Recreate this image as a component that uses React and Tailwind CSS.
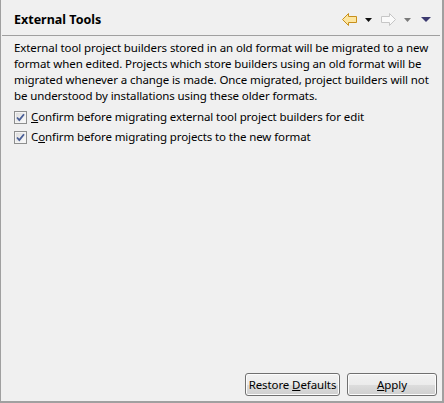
import React from "react";

function Checkbox() {
    return (
        <svg width="13" height="13" viewBox="0 0 13 13" className="shrink-0">
            <defs>
                <linearGradient id="cbg" x1="0" y1="0" x2="1" y2="1">
                    <stop offset="0" stopColor="#dcdcdc" />
                    <stop offset="1" stopColor="#fbfbfb" />
                </linearGradient>
            </defs>
            <rect x="0.5" y="0.5" width="12" height="12" fill="#f4f4f4" stroke="#8e8f8f" />
            <rect x="1.5" y="1.5" width="10" height="10" fill="url(#cbg)" stroke="#f4f4f4" />
            <path d="M3 6.5 L5.3 9 L10 3.2" fill="none" stroke="#4a5f97" strokeWidth="1.8" />
        </svg>
    );
}

function Arrow({ fill, stroke, flip }) {
    return (
        <svg width="15" height="13" viewBox="0 0 15 13" className={flip ? "-scale-x-100" : ""}>
            <path d="M0.5 6.5 L6.5 0.5 V3.5 H14.5 V9.5 H6.5 V12.5 Z" fill={fill} stroke={stroke} strokeLinejoin="round" />
        </svg>
    );
}

function Tri({ w, h, color }) {
    return (
        <svg width={w} height={h} viewBox={`0 0 ${w} ${h}`}>
            <polygon points={`0,0 ${w},0 ${w / 2},${h}`} fill={color} />
        </svg>
    );
}

const btn = "h-[23px] whitespace-nowrap border border-[#707070] rounded-[3px] bg-[linear-gradient(#f2f2f2_0%,#ebebeb_50%,#dddddd_50%,#cfcfcf_100%)] shadow-[inset_0_0_0_1px_#fcfcfc] leading-none";

export default function App() {
    return (
        <div className="w-[444px] h-[403px] bg-[#f0f0f0] border-l border-r-2 border-b-2 border-[#a0a0a0] flex flex-col text-black font-['Noto_Sans',sans-serif]">
            <div className="h-[35px] flex items-center justify-between pl-[13px] pr-[11px]">
                <span className="text-[12.5px] font-bold leading-none pt-[5px]">External Tools</span>
                <div className="flex items-center pt-[4px]">
                    <Arrow fill="#fde6a0" stroke="#c8901c" />
                    <span className="ml-[8px]"><Tri w={7} h={4} color="#111" /></span>
                    <span className="ml-[9px]"><Arrow fill="#fafafa" stroke="#c6c6c6" flip /></span>
                    <span className="ml-[8px]"><Tri w={7} h={4} color="#7a7a7a" /></span>
                    <span className="ml-[10px]"><Tri w={10} h={5} color="#3c3a70" /></span>
                </div>
            </div>
            <div className="ml-[1px] mr-[2px] h-px bg-[#a0a0a0]" />

            <div className="px-[13px] pt-[4px] text-[11.5px] tracking-[-0.1px] leading-[16px]">
                <p className="whitespace-nowrap">
                    External tool project builders stored in an old format will be migrated to a new<br />
                    format when edited. Projects which store builders using an old format will be<br />
                    migrated whenever a change is made. Once migrated, project builders will not<br />
                    be understood by installations using these older formats.
                </p>
                <div className="mt-[3px] flex flex-col">
                    <label className="h-[20px] flex items-center gap-[4px]">
                        <Checkbox />
                        <span><u>C</u>onfirm before migrating external tool project builders for edit</span>
                    </label>
                    <label className="h-[20px] flex items-center gap-[4px]">
                        <Checkbox />
                        <span>C<u>o</u>nfirm before migrating projects to the new format</span>
                    </label>
                </div>
            </div>

            <div className="flex-1" />

            <div className="flex justify-end gap-[7px] pr-[5px] pb-[5px] text-[11.5px] tracking-[-0.1px]">
                <button className={"w-[95px] " + btn}>
                    Restore <u>D</u>efaults
                </button>
                <button className={"w-[90px] " + btn}>
                    <u>A</u>pply
                </button>
            </div>
        </div>
    );
}
